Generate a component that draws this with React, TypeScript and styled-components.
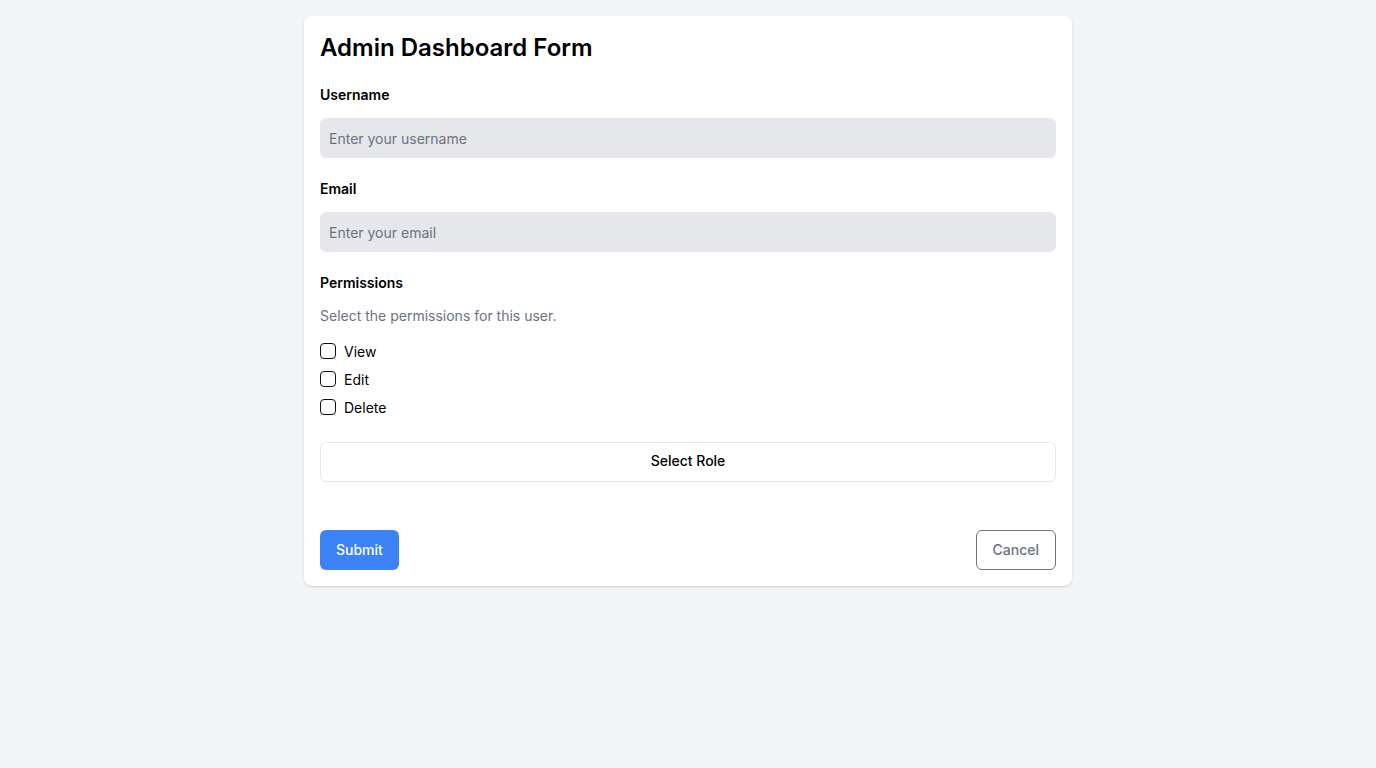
import React from "react";
import styled, { createGlobalStyle } from "styled-components";

const Global = createGlobalStyle`
  html, body { margin: 0; padding: 0; background: #f3f4f6; }
  body { font-family: Inter, "Noto Sans", sans-serif; color: #000; }
  * { box-sizing: border-box; }
`;

const Page = styled.div`
  padding: 16px;
  min-height: 768px;
`;

const Card = styled.form`
  max-width: 768px;
  margin: 0 auto;
  background: #fff;
  border-radius: 8px;
  box-shadow: 0 1px 3px rgba(0,0,0,0.1), 0 1px 2px rgba(0,0,0,0.06);
  padding: 16px;
  display: flex;
  flex-direction: column;
`;

const Title = styled.h1`
  margin: 0 0 20px;
  font-size: 24px;
  line-height: 32px;
  font-weight: 600;
`;

const Field = styled.div`
  display: flex;
  flex-direction: column;
  margin-bottom: 20px;
`;

const Label = styled.label`
  font-size: 14px;
  line-height: 20px;
  font-weight: 600;
  padding-top: 1px;
  margin-bottom: 13px;
`;

const Input = styled.input`
  height: 40px;
  border: none;
  border-radius: 6px;
  background: #e5e7eb;
  padding: 0 9px;
  font-family: inherit;
  font-size: 14px;
  color: #111827;
  outline: none;
  &::placeholder { color: #6b7280; }
`;

const Description = styled.p`
  margin: 0 0 13px;
  font-size: 14px;
  line-height: 20px;
  color: #6b7280;
`;

const CheckList = styled.div`
  display: flex;
  flex-direction: column;
  gap: 4px;
`;

const CheckRow = styled.label`
  display: flex;
  align-items: center;
  gap: 8px;
  height: 24px;
  font-size: 14px;
  color: #000;
`;

const Box = styled.span`
  width: 16px;
  height: 16px;
  border: 1px solid #111;
  border-radius: 4px;
  background: #fff;
  flex: none;
`;

const RoleButton = styled.button`
  margin-top: 23px;
  height: 40px;
  width: 100%;
  padding: 0 0 3px;
  background: #fff;
  border: 1px solid #e5e7eb;
  border-radius: 6px;
  font-family: inherit;
  font-size: 14px;
  line-height: 20px;
  font-weight: 500;
  color: #000;
`;

const Actions = styled.div`
  margin-top: 48px;
  display: flex;
  justify-content: space-between;
`;

const Button = styled.button<{ $variant: "primary" | "outline" }>`
  height: 40px;
  padding: 0 16px 1px;
  border-radius: 6px;
  font-family: inherit;
  font-size: 14px;
  line-height: 20px;
  font-weight: 500;
  background: ${(p) => (p.$variant === "primary" ? "#3b82f6" : "#fff")};
  color: ${(p) => (p.$variant === "primary" ? "#fff" : "#6b7280")};
  border: ${(p) => (p.$variant === "primary" ? "none" : "1px solid #6b7280")};
`;

export default function App() {
  const perms = ["View", "Edit", "Delete"];
  return (
    <Page>
      <Global />
      <Card onSubmit={(e) => e.preventDefault()}>
        <Title>Admin Dashboard Form</Title>
        <Field>
          <Label>Username</Label>
          <Input placeholder="Enter your username" />
        </Field>
        <Field>
          <Label>Email</Label>
          <Input placeholder="Enter your email" />
        </Field>
        <Label>Permissions</Label>
        <Description>Select the permissions for this user.</Description>
        <CheckList>
          {perms.map((p) => (
            <CheckRow key={p}>
              <Box />
              {p}
            </CheckRow>
          ))}
        </CheckList>
        <RoleButton type="button">Select Role</RoleButton>
        <Actions>
          <Button $variant="primary" type="submit">Submit</Button>
          <Button $variant="outline" type="button">Cancel</Button>
        </Actions>
      </Card>
    </Page>
  );
}
